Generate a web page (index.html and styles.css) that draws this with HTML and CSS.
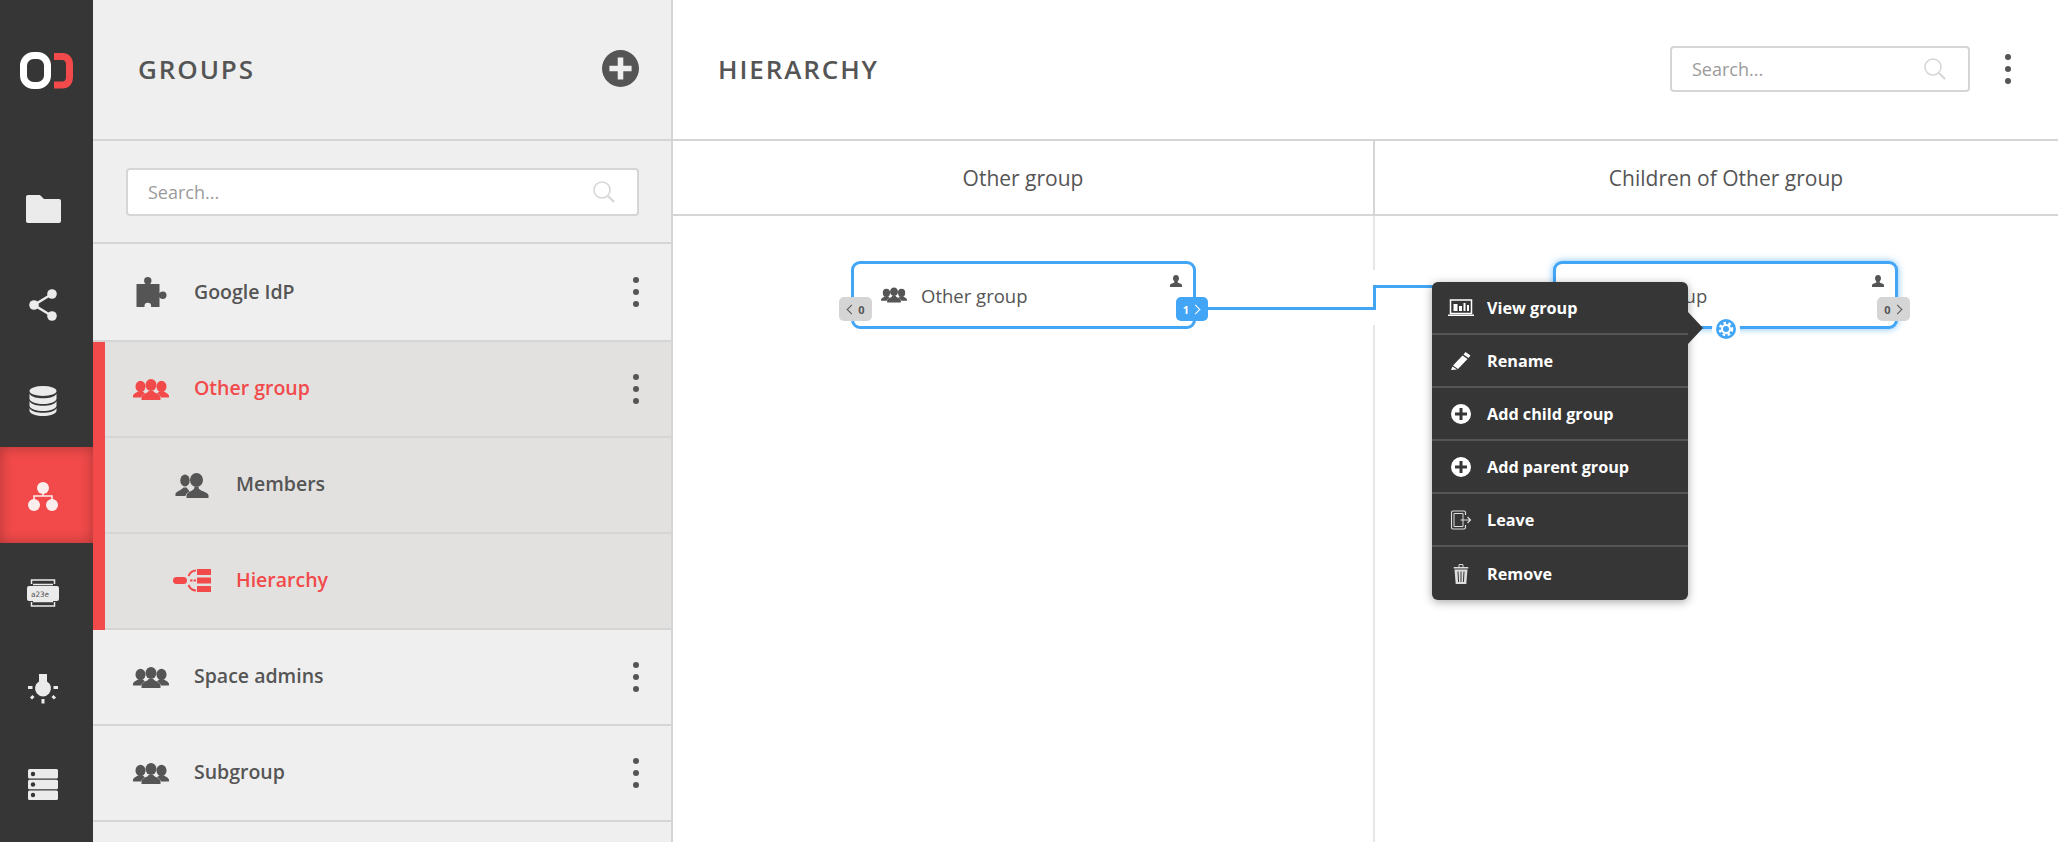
FILE: index.html
```html
<!DOCTYPE html>
<html>
<head>
    <title>Groups - Hierarchy</title>
    <link rel="stylesheet" href="styles.css">
</head>
<body>

    <!-- Shared icons -->
    <svg class="icon-defs" width="0" height="0">
        <symbol id="i-team" viewBox="0 0 36 21">
            <g fill="currentColor">
                <ellipse cx="7.500" cy="7.500" rx="5" ry="5.800"/>
                <ellipse cx="28.500" cy="7.500" rx="5" ry="5.800"/>
                <path d="M0 18.500v-1.500c0-2 3-3 5-4.500h5l2 2c-2 1-3.500 2-4 4z"/>
                <path d="M36 18.500v-1.500c0-2-3-3-5-4.500h-5l-2 2c2 1 3.500 2 4 4z"/>
                <ellipse cx="18" cy="6" rx="5.500" ry="6"/>
                <path d="M8.500 21v-2.500c0-2.500 3-3.500 6.500-5.500l.5-1h5l.5 1c3.500 2 6.500 3 6.500 5.500V21z"/>
            </g>
        </symbol>
        <symbol id="i-user" viewBox="0 0 12 12">
            <path fill="currentColor" d="M6 0c1.900 0 3 1.400 3 3.200 0 1.300-.6 2.500-1.300 3.100v1.200l2.300 1c1.300.5 2 .9 2 2V12H0v-1.500c0-1.100.7-1.500 2-2l2.300-1V6.300C3.600 5.700 3 4.500 3 3.200 3 1.400 4.100 0 6 0z"/>
        </symbol>
        <symbol id="i-search" viewBox="0 0 22 22">
            <circle cx="9" cy="9" r="8" fill="none" stroke="currentColor" stroke-width="1.500"/>
            <path d="M15 15l6 6" fill="none" stroke="currentColor" stroke-width="2"/>
        </symbol>
        <symbol id="i-dots" viewBox="0 0 6 30">
            <circle cx="3" cy="3" r="3" fill="currentColor"/>
            <circle cx="3" cy="15" r="3" fill="currentColor"/>
            <circle cx="3" cy="27" r="3" fill="currentColor"/>
        </symbol>
        <symbol id="i-add" viewBox="0 0 20 20">
            <path fill="currentColor" fill-rule="evenodd" d="M10 0a10 10 0 1 1 0 20a10 10 0 0 1 0-20zM8.500 4v4.500H4v3h4.500V16h3v-4.500H16v-3h-4.500V4z"/>
        </symbol>
    </svg>

    <div class="app">

        <!-- Main menu -->
        <nav class="rail">
            <div class="rail-logo">
                <svg width="54" height="38" viewBox="0 0 54 38">
                    <rect x="3.500" y="3.500" width="24" height="30" rx="10" fill="none" stroke="#fff" stroke-width="7"/>
                    <path d="M34 4.500h8c5 0 7.500 3 7.500 8v12.500c0 5-2.500 8-7.500 8h-8" fill="none" stroke="#f24a4a" stroke-width="7"/>
                </svg>
            </div>
            <a class="rail-item">
                <svg width="35" height="28" viewBox="0 0 35 28"><path fill="#ebebeb" d="M2 0h11c1 0 1.500.5 2.500 1.500L18 4h15c1.200 0 2 .8 2 2v20c0 1.200-.8 2-2 2H2c-1.200 0-2-.8-2-2V2C0 .8.800 0 2 0z"/></svg>
            </a>
            <a class="rail-item">
                <svg width="28" height="32" viewBox="0 0 28 32">
                    <path d="M23 5L5 16l18 11" fill="none" stroke="#ebebeb" stroke-width="2.500"/>
                    <circle cx="23" cy="5" r="4.800" fill="#ebebeb"/>
                    <circle cx="5" cy="16" r="4.800" fill="#ebebeb"/>
                    <circle cx="23" cy="27" r="4.800" fill="#ebebeb"/>
                </svg>
            </a>
            <a class="rail-item">
                <svg width="28" height="30" viewBox="0 0 28 30">
                    <ellipse cx="14" cy="5" rx="13.500" ry="5" fill="#ebebeb"/>
                    <path fill="#ebebeb" d="M.5 7.500C2 11 8 12.300 14 12.300S26 11 27.500 7.500V13c-1 3.500-7 5-13.500 5S1.500 16.500.5 13z"/>
                    <path fill="#ebebeb" d="M.5 15c1.500 3.500 7.500 4.800 13.500 4.800S26 18.500 27.500 15v5c-1 3.500-7 5-13.500 5S1.500 23.500.5 20z"/>
                    <path fill="#ebebeb" d="M.5 22c1.500 3.500 7.500 4.800 13.500 4.800S26 25.500 27.500 22v3c-1 3.500-7 5-13.500 5S1.500 28.500.5 25z"/>
                </svg>
            </a>
            <a class="rail-item active">
                <svg width="30" height="29" viewBox="0 0 30 29">
                    <path d="M15 8v6M6 18v-4h18v4" fill="none" stroke="#fdeeee" stroke-width="1.500"/>
                    <circle cx="15" cy="6" r="6" fill="#fdeeee"/>
                    <circle cx="6" cy="23" r="6" fill="#fdeeee"/>
                    <circle cx="24" cy="23" r="6" fill="#fdeeee"/>
                </svg>
            </a>
            <a class="rail-item">
                <svg width="32" height="28" viewBox="0 0 32 28">
                    <path d="M4.500 5V1h23v4M4.500 23v4h23v-4" fill="none" stroke="#ebebeb" stroke-width="1.500"/>
                    <path d="M6 5.500h20M6 22.500h20" stroke="#ebebeb" stroke-width="1.500"/>
                    <rect y="7" width="32" height="15" rx="2" fill="#ebebeb"/>
                    <text x="4" y="17.500" class="key-text">a23e</text>
                </svg>
            </a>
            <a class="rail-item">
                <svg width="30" height="30" viewBox="0 0 30 30">
                    <path fill="#ebebeb" d="M11 0h8v7.500a8 8 0 1 1-8 0z"/>
                    <path d="M0 13.500h4.500M25.500 13.500H30M15 25v4.500M5.500 22l-2.500 2.500M24.500 22l2.500 2.500" stroke="#ebebeb" stroke-width="3"/>
                </svg>
            </a>
            <a class="rail-item">
                <svg width="30" height="31" viewBox="0 0 30 31">
                    <rect width="30" height="9.500" rx="1.500" fill="#ebebeb"/>
                    <rect y="10.700" width="30" height="9.500" rx="1.500" fill="#ebebeb"/>
                    <rect y="21.400" width="30" height="9.500" rx="1.500" fill="#ebebeb"/>
                    <circle cx="5" cy="5" r="2.200" fill="#363636"/>
                    <circle cx="5" cy="15.500" r="2.200" fill="#363636"/>
                    <circle cx="5" cy="26" r="2.200" fill="#363636"/>
                </svg>
            </a>
        </nav>

        <!-- Groups sidebar -->
        <aside class="sidebar">
            <header class="sidebar-header">
                <h1 class="title">GROUPS</h1>
                <svg class="add-btn" width="37" height="37"><use href="#i-add"/></svg>
            </header>
            <div class="sidebar-search">
                <div class="search-box">
                    <span class="search-text">Search...</span>
                    <svg width="22" height="22"><use href="#i-search"/></svg>
                </div>
            </div>
            <ul class="group-list">
                <li class="row first">
                    <svg class="row-icon" width="35" height="30" viewBox="0 0 35 30">
                        <g fill="#555">
                            <rect x="3" y="7" width="23" height="23"/>
                            <circle cx="14.300" cy="3.700" r="3.700"/>
                            <rect x="12.300" y="5" width="4" height="3"/>
                            <circle cx="29.300" cy="18.300" r="3.700"/>
                            <rect x="25" y="16.300" width="3" height="4"/>
                        </g>
                        <circle cx="14.300" cy="29" r="3.300" fill="#efefef"/>
                    </svg>
                    <span class="row-label">Google IdP</span>
                    <svg class="row-dots" width="6" height="30"><use href="#i-dots"/></svg>
                </li>
                <li class="row selected">
                    <svg class="row-icon red" width="36" height="21"><use href="#i-team"/></svg>
                    <span class="row-label red">Other group</span>
                    <svg class="row-dots" width="6" height="30"><use href="#i-dots"/></svg>
                </li>
                <li class="row selected sub">
                    <svg class="row-icon" width="33" height="25" viewBox="0 0 33 25">
                        <g fill="#555">
                            <ellipse cx="9.500" cy="7.500" rx="4.700" ry="6"/>
                            <path d="M0 23v-2c0-2 4-3 7-5.500l1-1h3l2 2.500 1 1.500c-3 1.500-4 3-4 4.500z"/>
                            <ellipse cx="21" cy="7" rx="6.500" ry="7"/>
                            <path d="M11 25v-2.500c0-3 5-4 7.500-6.500l.5-2h4l.5 2c2.500 2.500 9.500 3.500 9.500 6.500V25z"/>
                        </g>
                    </svg>
                    <span class="row-label">Members</span>
                </li>
                <li class="row selected sub">
                    <svg class="row-icon red" width="38" height="24" viewBox="0 0 38 24">
                        <rect x="0" y="8" width="14" height="7" rx="3.500" fill="currentColor"/>
                        <path d="M23 1.500c-3.500 0-6 2-7.500 5.500M23 21.500c-3.500 0-6-2-7.500-5.500" fill="none" stroke="currentColor" stroke-width="2"/>
                        <path d="M17 11.500h2.500M20.500 11.500H23" stroke="currentColor" stroke-width="2"/>
                        <rect x="24" y="0" width="14" height="6" fill="currentColor"/>
                        <rect x="24" y="8.500" width="14" height="6" fill="currentColor"/>
                        <rect x="24" y="17" width="14" height="6" fill="currentColor"/>
                    </svg>
                    <span class="row-label red">Hierarchy</span>
                </li>
                <li class="row">
                    <svg class="row-icon" width="36" height="21"><use href="#i-team"/></svg>
                    <span class="row-label">Space admins</span>
                    <svg class="row-dots" width="6" height="30"><use href="#i-dots"/></svg>
                </li>
                <li class="row">
                    <svg class="row-icon" width="36" height="21"><use href="#i-team"/></svg>
                    <span class="row-label">Subgroup</span>
                    <svg class="row-dots" width="6" height="30"><use href="#i-dots"/></svg>
                </li>
            </ul>
        </aside>

        <!-- Hierarchy view -->
        <main class="content">
            <header class="content-header">
                <h2 class="title">HIERARCHY</h2>
                <div class="search-box small">
                    <span class="search-text">Search...</span>
                    <svg width="22" height="22"><use href="#i-search"/></svg>
                </div>
                <svg class="header-dots" width="6" height="30"><use href="#i-dots"/></svg>
            </header>
            <div class="columns">
                <div class="col-head">Other group</div>
                <div class="col-head last">Children of Other group</div>
            </div>

            <div class="canvas">
                <div class="col-line"></div>
                <div class="line-gap"></div>

                <!-- connector between the nodes -->
                <div class="link link-a"></div>
                <div class="link link-b"></div>
                <div class="link link-c"></div>

                <div class="node node-left">
                    <svg class="node-icon" width="26" height="16"><use href="#i-team"/></svg>
                    <span>Other group</span>
                    <svg class="node-user" width="12" height="12"><use href="#i-user"/></svg>
                    <div class="badge badge-in"><i class="chev chev-l"></i><b>0</b></div>
                    <div class="badge badge-out on"><b>1</b><i class="chev"></i></div>
                </div>

                <div class="node node-right">
                    <svg class="node-icon" width="26" height="16"><use href="#i-team"/></svg>
                    <span>Subgroup</span>
                    <svg class="node-user" width="12" height="12"><use href="#i-user"/></svg>
                    <div class="badge badge-out"><b>0</b><i class="chev"></i></div>
                    <div class="gear">
                        <svg width="20" height="20" viewBox="0 0 20 20">
                            <circle cx="10" cy="10" r="10" fill="#42a5f5"/>
                            <circle cx="10" cy="10" r="5" fill="#fff"/>
                            <circle cx="10" cy="10" r="6" fill="none" stroke="#fff" stroke-width="2.500" stroke-dasharray="2.600 2.400"/>
                            <circle cx="10" cy="10" r="3" fill="#42a5f5"/>
                        </svg>
                    </div>
                </div>

                <ul class="menu">
                    <li class="menu-item">
                        <svg width="26" height="18" viewBox="0 0 26 18">
                            <rect x="2.500" y="1" width="21" height="13.500" fill="none" stroke="#fff" stroke-width="1.500"/>
                            <path d="M0 15.500h26V17H0z" fill="#fff"/>
                            <path d="M5.500 5h4v7h-4zM11 7h3v5h-3zM15.500 4h2v8h-2zM19 6h2v6h-2z" fill="#fff"/>
                        </svg>
                        <span>View group</span>
                    </li>
                    <li class="menu-item">
                        <svg width="20" height="18" viewBox="0 0 20 18">
                            <path fill="#fff" d="M14.500 0l5 3.500-2 2.500-5-3.500zM11.500 3.500l5 3.500L7 17l-5-3.500zM1.500 14.500l4.500 3-6 .5z"/>
                        </svg>
                        <span>Rename</span>
                    </li>
                    <li class="menu-item">
                        <svg width="20" height="20"><use href="#i-add"/></svg>
                        <span>Add child group</span>
                    </li>
                    <li class="menu-item">
                        <svg width="20" height="20"><use href="#i-add"/></svg>
                        <span>Add parent group</span>
                    </li>
                    <li class="menu-item">
                        <svg width="21" height="20" viewBox="0 0 21 20">
                            <path d="M15 5V2.500c0-1-.5-1.500-1.500-1.500h-11C1.500 1 1 1.500 1 2.500v15c0 1 .5 1.500 1.500 1.500h11c1 0 1.500-.5 1.500-1.500V15" fill="none" stroke="#ddd" stroke-width="1.200"/>
                            <path d="M3.500 3.500h9v13h-9z" fill="none" stroke="#ddd" stroke-width="1"/>
                            <path d="M10 10h10M17 7l3 3-3 3" fill="none" stroke="#ddd" stroke-width="1.200"/>
                        </svg>
                        <span>Leave</span>
                    </li>
                    <li class="menu-item">
                        <svg width="15" height="20" viewBox="0 0 15 20">
                            <path fill="#ddd" fill-rule="evenodd" d="M0 3h15v1.500H0zM5 3V1.500C5 .5 5.500 0 6.500 0h2c1 0 1.500.5 1.500 1.500V3H9V1H6v2zM1 5.500h13L12.800 20H2.200zM4 7.500l.6 10.500h1L5 7.500zM7 7.500V18h1V7.500zM10 7.500L9.400 18h1l.6-10.500z"/>
                        </svg>
                        <span>Remove</span>
                    </li>
                </ul>
                <div class="menu-arrow"></div>
            </div>
        </main>
    </div>

</body>
</html>
```
FILE: styles.css
```css
html, body {
    margin: 0;
    height: 100%;
    overflow: hidden;
}

body {
    font-family: 'Open Sans', sans-serif;
    color: #555;
    background: #fff;
}

ul {
    list-style: none;
    margin: 0;
    padding: 0;
}

.icon-defs {
    position: absolute;
}

.app {
    display: flex;
    height: 842px;
}

/* Main menu */
.rail {
    width: 93px;
    flex: none;
    background: #363636;
    display: flex;
    flex-direction: column;
}

.rail-logo {
    height: 159px;
    flex: none;
    box-sizing: border-box;
    padding-bottom: 18px;
    display: flex;
    align-items: center;
    justify-content: center;
}

.rail-item {
    height: 96px;
    box-sizing: border-box;
    padding: 3px 7px 0 0;
    display: flex;
    align-items: center;
    justify-content: center;
    flex: none;
}

.rail-item.active {
    background: #f24a4a;
    box-shadow: inset 0 0 14px rgba(0, 0, 0, 0.28);
}

.key-text {
    font-family: 'DejaVu Sans Mono', monospace;
    font-size: 7.500px;
    fill: #555;
}

/* Sidebar */
.sidebar {
    width: 580px;
    flex: none;
    background: #efefef;
    border-right: 2px solid #d5d5d5;
    box-sizing: border-box;
}

.title {
    margin: 0;
    font-size: 26px;
    font-weight: 600;
    letter-spacing: 1.900px;
    color: #555;
}

.sidebar-header {
    height: 141px;
    box-sizing: border-box;
    padding: 0 32px 2px 45px;
    border-bottom: 2px solid #d5d5d5;
    display: flex;
    align-items: center;
    justify-content: space-between;
}

.add-btn {
    color: #555;
}

.sidebar-search {
    height: 103px;
    box-sizing: border-box;
    padding: 27px 32px 0 33px;
    border-bottom: 2px solid #d5d5d5;
}

.search-box {
    height: 48px;
    box-sizing: border-box;
    padding: 0 22px 0 20px;
    background: #fff;
    border: 2px solid #d5d5d5;
    border-radius: 4px;
    display: flex;
    align-items: center;
    justify-content: space-between;
    color: #d5d5d5;
}

.search-text {
    font-size: 18px;
    color: #9b9b9b;
}

.search-box.small {
    width: 300px;
    height: 46px;
    margin-left: auto;
    margin-right: 35px;
}

.row {
    height: 96px;
    box-sizing: border-box;
    border-bottom: 2px solid #d5d5d5;
    display: flex;
    align-items: center;
    padding: 0 32px 0 40px;
    position: relative;
    color: #555;
}

.row.first {
    height: 98px;
}

.row-icon {
    flex: none;
    margin-right: 25px;
    width: 36px;
}

.row-label {
    font-size: 19.500px;
    font-weight: 600;
    flex: 1;
    position: relative;
    top: -2px;
}

.row.first .row-label {
    top: -1px;
}

.row.selected {
    background: #e2e1df;
}

.row.selected::before {
    content: "";
    position: absolute;
    left: 0;
    top: 0;
    bottom: -2px;
    width: 12px;
    background: #f24a4a;
}

.row.sub {
    padding-left: 80px;
}

.row.sub .row-icon {
    width: 38px;
}

.red {
    color: #f24a4a;
}

/* Hierarchy view */
.content {
    flex: 1;
    min-width: 0;
    position: relative;
    overflow: hidden;
}

.content-header {
    height: 141px;
    box-sizing: border-box;
    padding: 0 47px 2px 45px;
    border-bottom: 2px solid #d5d5d5;
    display: flex;
    align-items: center;
}

.header-dots {
    color: #555;
}

.columns {
    display: flex;
    width: 1404px;
    height: 75px;
    box-sizing: border-box;
    border-bottom: 2px solid #d5d5d5;
}

.col-head {
    width: 702px;
    box-sizing: border-box;
    border-right: 2px solid #d5d5d5;
    font-size: 21px;
    line-height: 75px;
    text-align: center;
    color: #555;
}

.col-head.last {
    border-right: none;
}

/* Canvas: nodes sit at free coordinates */
.canvas {
    position: absolute;
    left: 0;
    top: 215px;
    right: 0;
    bottom: 0;
}

.col-line {
    position: absolute;
    left: 700px;
    top: 1px;
    bottom: 0;
    width: 2px;
    background: #e6e6e6;
}

.line-gap {
    position: absolute;
    left: 699px;
    top: 55px;
    width: 4px;
    height: 55px;
    background: #fff;
}

.link {
    position: absolute;
    background: #42a5f5;
}

.link-a {
    left: 535px;
    top: 92px;
    width: 168px;
    height: 3px;
}

.link-b {
    left: 700px;
    top: 70px;
    width: 3px;
    height: 25px;
}

.link-c {
    left: 700px;
    top: 70px;
    width: 80px;
    height: 3px;
}

.node {
    position: absolute;
    width: 345px;
    height: 68px;
    box-sizing: border-box;
    top: 46px;
    background: #fff;
    border: 3px solid #42a5f5;
    border-radius: 9px;
    display: flex;
    align-items: center;
    padding: 0 0 0 27px;
    font-size: 18.500px;
    color: #555;
}

.node-left {
    left: 178px;
}

.node-right {
    left: 880px;
    box-shadow: 0 0 7px rgba(66, 165, 245, 0.7);
}

.node-icon {
    margin-right: 14px;
}

.node-user {
    position: absolute;
    right: 11px;
    top: 11px;
}

.badge {
    position: absolute;
    top: 33px;
    height: 24px;
    width: 33px;
    box-sizing: border-box;
    background: #d5d5d5;
    border-radius: 5px;
    display: flex;
    align-items: center;
    justify-content: center;
    gap: 3px;
    font-size: 11px;
    color: #555;
}

.badge b {
    font-weight: 700;
}

.badge-in {
    left: -15px;
}

.badge-out {
    right: -15px;
}

.badge.on {
    background: #42a5f5;
    color: #fff;
    width: 32px;
    right: -15px;
}

.chev {
    width: 6px;
    height: 6px;
    border-top: 1px solid currentColor;
    border-right: 1px solid currentColor;
    transform: rotate(45deg);
    margin-right: 2px;
}

.chev-l {
    transform: rotate(-135deg);
    margin: 0 0 0 2px;
}

.gear {
    position: absolute;
    left: 156px;
    top: 51px;
    width: 28px;
    height: 28px;
    background: #fff;
    border-radius: 50%;
    display: flex;
    align-items: center;
    justify-content: center;
}

/* Popup menu */
.menu {
    position: absolute;
    left: 759px;
    top: 67px;
    width: 256px;
    background: #363636;
    border-radius: 6px;
    box-shadow: 0 2px 10px rgba(0, 0, 0, 0.35);
}

.menu-item {
    height: 53px;
    box-sizing: border-box;
    border-bottom: 2px solid #555;
    display: flex;
    align-items: center;
    padding-left: 55px;
    position: relative;
    font-size: 16.200px;
    font-weight: 700;
    color: #fff;
}

.menu-item:last-child {
    border-bottom: none;
}

.menu-item svg {
    position: absolute;
    left: 29px;
    top: 50%;
    transform: translate(-50%, -50%);
    color: #fff;
}

.menu-arrow {
    position: absolute;
    left: 1015px;
    top: 97px;
    width: 0;
    height: 0;
    border-left: 15px solid #363636;
    border-top: 16px solid transparent;
    border-bottom: 16px solid transparent;
}
```
